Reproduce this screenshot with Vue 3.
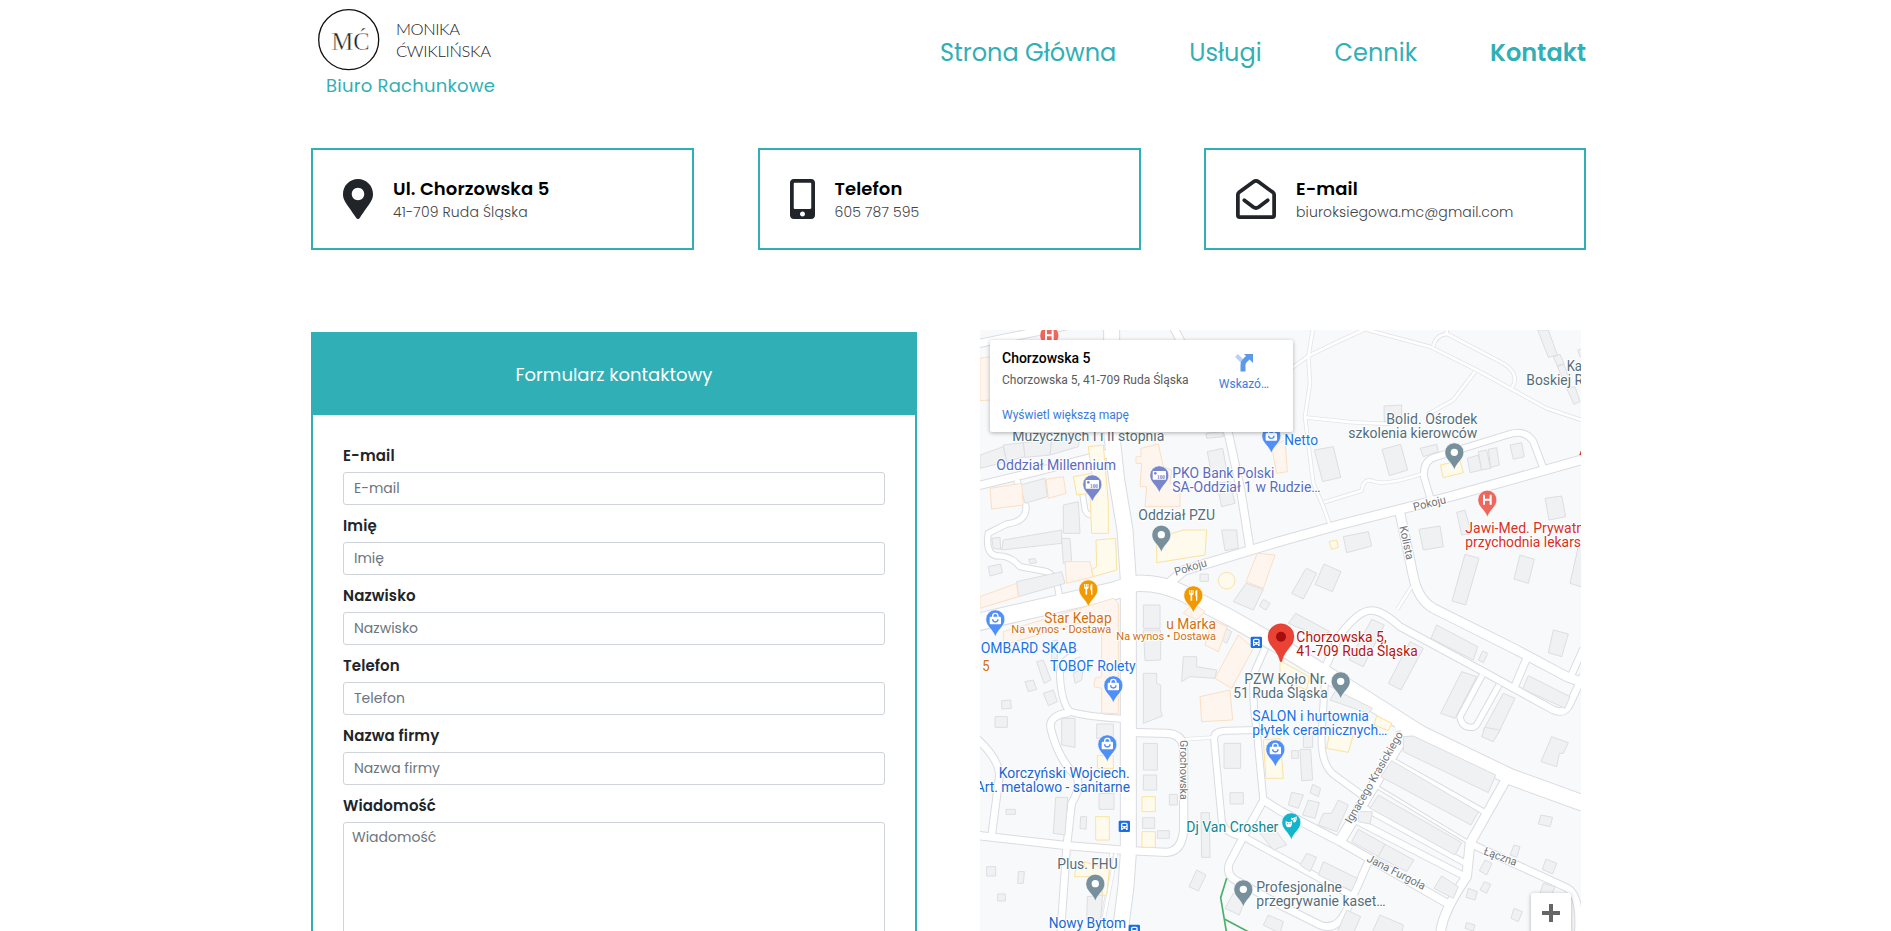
<script setup>
const nav = [
  { text: 'Strona Główna', cls: 'n1' },
  { text: 'Usługi', cls: 'n2' },
  { text: 'Cennik', cls: 'n3' },
  { text: 'Kontakt', cls: 'n4' }
]

const fields = ['E-mail', 'Imię', 'Nazwisko', 'Telefon', 'Nazwa firmy']

// Map geometry: three units per CSS pixel.
const roads = [
  [45, 'M425 30V340L440 480L465 630L475 780V1600L468 1700L450 1840'],
  [22, 'M610 20L650 100L775 340L812 510L842 700'],
  [50, 'M20 907L450 808'],
  [46, 'M440 807L500 790Q570 787 640 820L780 893L930 978L1130 1100L1350 1240L1620 1370L1840 1450'],
  [26, 'M585 800L640 752L930 664L1110 614L1440 530L1840 418'],
  [18, 'M1384 545L1362 470Q1358 420 1400 410L1610 345Q1665 325 1690 365L1722 450'],
  [26, 'M1290 580L1305 650L1330 770Q1345 840 1390 865L1640 990L1790 1070L1840 1088'],
  [20, 'M1672 1010L1634 1100'],
  [20, 'M1062 1050L1110 945Q1170 865 1210 872Q1240 875 1290 920L1540 1055L1750 1170Q1785 1185 1800 1150L1840 1065'],
  [18, 'M1800 1075L1840 985'],
  [16, 'M1537 1065L1470 1190Q1475 1225 1510 1222L1520 1215L1587 1095'],
  [22, 'M20 498L170 462L415 400'],
  [16, 'M140 480L168 560Q170 605 110 612L55 640Q45 700 80 708Q120 705 150 740L230 755Q262 770 268 830'],
  [14, 'M335 505L345 570Q350 585 372 588'],
  [22, 'M20 72L215 32L300 15'],
  [18, 'M328 1000Q265 1020 270 1070Q275 1150 300 1175Q350 1190 460 1197'],
  [20, 'M300 1178Q235 1185 242 1225Q265 1320 320 1370Q335 1400 305 1450L290 1580L272 1840'],
  [20, 'M20 1255Q90 1320 88 1370L65 1545'],
  [22, 'M20 1546L290 1577L475 1592L590 1597Q635 1595 641 1530V1290Q640 1242 590 1240L475 1237'],
  [18, 'M885 985L852 1060Q845 1130 860 1230L880 1440'],
  [18, 'M865 1230L770 1232Q732 1232 732 1255L755 1500Q760 1540 820 1550'],
  [20, 'M880 1442L820 1550L778 1630Q765 1670 810 1687L930 1755L1050 1815Q1100 1835 1130 1770L1202 1610'],
  [22, 'M880 1440L930 1472L1110 1565L1440 1755'],
  [18, 'M820 1550L930 1610L1160 1735'],
  [30, 'M1315 1225L1112 1560'],
  [18, 'M1065 1080L1055 1240Q1050 1340 1100 1370L1175 1425'],
  [26, 'M1612 1372L1500 1570L1490 1670Q1415 1780 1412 1840'],
  [14, 'M1265 1320L1542 1475'],
  [7, 'M1220 1400L1500 1570'],
  [16, 'M1180 1462L1487 1630'],
  [18, 'M1155 1500L1482 1668'],
  [20, 'M1510 1575L1790 1703Q1833 1725 1825 1840'],
  [14, 'M1300 1222L1276 1226'],
]
const paths = [
  'M1030 20L1015 110L1020 190L1005 290L1030 490L1060 560L1082 622',
  'M960 148L1015 108L1110 62L1185 28L1380 80L1520 150L1730 265L1840 302',
  'M1390 80Q1395 45 1432 42L1590 125Q1655 160 1625 205',
  'M1430 20V42', 'M1515 155L1450 240L1370 285',
  'M1005 292L1150 307L1260 312',
  'M1062 547L1175 512Q1180 475 1205 482Q1240 500 1355 462',
  'M1325 800L1282 868', 'M643 1258L732 1252',
  'M438 1600L395 1833', 'M425 1600L385 1800'
]
const grey = [
  '30,405 100,380 110,425 30,445', '100,375 160,368 165,410 110,425', '160,368 245,358 240,405 165,412', '245,358 330,350 325,380 240,405',
  '150,495 225,475 232,530 165,550', '280,555 325,545 330,640 280,640', '708,340 758,335 760,350 710,355', '712,395 758,385 770,450 725,465',
  '740,490 780,485 795,550 755,560', '1033,390 1090,380 1112,472 1058,485', '1236,388 1292,373 1313,450 1258,467', '1242,258 1295,255 1295,300 1243,305',
  '1350,385 1400,373 1405,395 1360,410', '1492,415 1525,405 1535,450 1500,458', '1525,395 1550,390 1562,445 1535,450', '1555,388 1580,383 1588,435 1562,442',
  '1620,375 1655,368 1663,410 1630,418', '1725,535 1775,528 1787,590 1737,600', '1460,577 1485,570 1505,640 1475,645', '1347,628 1410,618 1420,680 1360,690',
  '1703,30 1735,30 1762,105 1735,112', '1750,110 1770,103 1782,130 1762,138', '1762,140 1782,133 1800,185 1785,192', '1790,205 1815,200 1830,245 1812,253', '1823,90 1840,85 1840,110 1830,110',
  '1120,650 1195,635 1205,678 1130,698', '1005,750 1010,745 1040,760 1000,837 965,820', '1062,732 1113,755 1087,815 1035,793', '977,880 1080,935 1050,950 955,910',
  '1205,898 1243,915 1180,1040 1138,1020', '1320,965 1360,985 1293,1110 1255,1090', '1400,915 1523,980 1510,1020 1383,955', '1538,993 1553,1000 1540,1028 1525,1020',
  '1485,703 1527,715 1487,855 1446,843', '1650,705 1693,718 1675,790 1632,777', '1825,680 1840,680 1840,803 1800,790', '1750,930 1795,942 1775,1010 1735,998',
  '1675,1067 1800,1130 1785,1165 1658,1107', '1475,1055 1520,1070 1455,1195 1412,1180', '1600,1120 1635,1135 1585,1240 1540,1230', '1098,1110 1207,1165 1195,1180 1080,1140',
  '100,660 275,630 275,670 95,690', '65,655 90,652 92,688 70,685', '275,655 300,655 305,725 280,730', '140,785 275,755 285,790 145,830', '55,740 92,732 97,758 60,768', '176,718 195,716 200,728 180,731',
  '520,855 570,855 570,925 520,925', '520,930 572,930 572,1020 525,1022', '520,1060 560,1060 560,1090 572,1095 572,1170 577,1188 520,1210', '755,630 800,630 805,685 765,692',
  '690,762 715,762 715,784 690,784', '828,790 880,808 850,870 790,845', '880,838 900,850 888,870 868,858', '640,1010 680,1010 680,1040 740,1050 735,1075 660,1070 635,1085',
  '768,925 785,935 770,970 755,960', '200,1025 220,1020 243,1080 222,1090', '165,1085 190,1080 200,1108 175,1115', '220,1120 250,1110 262,1145 235,1157', '95,1142 122,1140 124,1165 95,1167',
  '75,1190 112,1190 112,1222 75,1222', '240,965 262,960 262,1015 245,1018', '310,1060 340,1045 335,1080 315,1090', '395,1110 445,1110 445,1145 395,1145',
  '275,1195 315,1195 315,1282 275,1275', '380,1212 430,1212 430,1250 380,1255', '387,1420 432,1420 432,1468 387,1468', '257,1432 293,1432 285,1545 250,1540',
  '332,1490 350,1490 348,1528 330,1525', '108,1468 136,1468 136,1483 108,1483', '520,1270 562,1270 562,1350 520,1350', '520,1365 560,1365 560,1410 520,1410',
  '518,1493 554,1493 554,1525 518,1525', '598,1423 622,1423 622,1455 598,1455', '562,1532 598,1532 598,1555 562,1555', '762,1270 812,1270 812,1345 762,1345',
  '780,1418 820,1418 820,1452 780,1452', '693,1478 718,1478 720,1612 695,1612', '680,1650 708,1665 685,1713 657,1700', '50,1640 77,1640 77,1668 50,1668',
  '145,1655 163,1655 160,1690 143,1690', '83,1722 106,1722 106,1743 83,1743', '352,1730 398,1725 392,1800 350,1800', '790,1720 825,1740 808,1785 765,1765', '895,1785 940,1805 930,1840 880,1815',
  '1300,1250 1330,1248 1577,1365 1555,1418 1300,1295', '1265,1322 1525,1475 1503,1515 1232,1370', '1225,1425 1475,1568 1455,1605 1200,1465', '1165,1528 1245,1573 1225,1610 1145,1565',
  '1245,1573 1332,1620 1310,1655 1225,1610', '1415,1668 1465,1700 1450,1735 1392,1705', '1745,1250 1795,1268 1780,1300 1768,1300 1760,1340 1713,1325', '1545,1222 1590,1230 1570,1265 1535,1250',
  '1713,1485 1748,1492 1740,1520 1705,1512', '1632,1575 1650,1580 1640,1612 1620,1605', '1545,1620 1566,1630 1550,1665 1528,1652', '1728,1617 1760,1630 1748,1662 1717,1648',
  '1543,1685 1562,1693 1550,1720 1530,1710', '1495,1705 1522,1715 1515,1740 1488,1732', '1632,1765 1657,1775 1645,1805 1623,1795', '1490,1808 1515,1815 1510,1833 1485,1825',
  '1720,1690 1755,1700 1745,1725 1710,1720', '1230,1785 1300,1815 1295,1840 1205,1840', '1130,1770 1172,1790 1150,1840 1100,1840', '1060,1625 1162,1675 1145,1712 1045,1665',
  '1010,1600 1040,1612 1020,1655 990,1635', '1105,1440 1135,1455 1100,1535 1045,1515 1060,1480 1085,1480', '1015,1440 1048,1448 1035,1495 998,1485', '965,1417 1000,1425 985,1465 955,1455',
  '1028,1393 1052,1405 1045,1430 1020,1418', '990,1288 1022,1288 1028,1380 995,1382', '965,1292 985,1292 985,1315 965,1315', '1165,1475 1207,1475 1200,1512 1165,1505', '1000,1240 1028,1240 1028,1282 1000,1282',
  '870,1540 905,1515 950,1575 910,1590'
]
const orange = [
  '30,115 62,110 62,240 30,242', '60,505 155,490 160,555 65,567', '228,478 280,470 288,520 235,535',
  '513,385 565,372 580,440 605,450 600,490 630,490 630,560 525,560 530,500 510,500 515,430 498,430 498,410 513,410',
  '905,380 945,360 952,455 920,460', '285,725 360,725 370,770 290,790', '30,830 140,790 145,830 30,865',
  '100,935 430,835 445,850 445,1180 395,1180 395,1105 372,1100 375,1075 395,1070 395,890 100,975',
  '862,700 915,705 880,805 828,785', '805,945 850,985 785,1105 735,1075', '725,900 772,920 745,995 705,975', '690,1130 780,1110 788,1200 695,1205', '640,880 670,850 705,875 680,900'
]
const yellow = [
  '310,470 365,460 355,380 400,375 415,550 415,640 365,640 360,520 320,525', '378,660 437,655 440,750 370,770 365,750 380,740', '560,655 575,650 640,630 710,630 705,705 560,728',
  '1411,435 1470,422 1480,458 1420,473', '1078,665 1100,660 1105,682 1085,688', '930,1022 1018,1070 1010,1110 930,1075', '1220,1187 1265,1210 1255,1232 1212,1215',
  '382,1307 430,1307 430,1345 382,1345', '377,1490 418,1490 418,1560 377,1560', '516,1430 556,1430 556,1475 516,1475', '516,1535 556,1535 556,1582 516,1582',
  '343,1625 418,1650 410,1725 400,1728 388,1670 313,1670 318,1645 343,1640', '880,1260 930,1255 940,1375 888,1375', '1080,1232 1150,1245 1135,1297 1070,1285'
]

// kind, centre x, centre y, colour
const pins = [
  ['hosp', 238, 46, '#ee675c'], ['bank', 367, 493, '#7986cb'], ['bank', 568, 466, '#7986cb'], ['bag', 904, 347, '#4f8ff7'],
  ['dot', 1453, 397, '#78909c'], ['dot', 574, 644, '#78909c'], ['hosp', 1552, 539, '#ee675c'],
  ['food', 355, 808, '#f29900'], ['food', 670, 826, '#f29900'], ['bag', 76, 898, '#4f8ff7'], ['bag', 430, 1096, '#4f8ff7'],
  ['dot', 1112, 1084, '#78909c'], ['bag', 916, 1288, '#4f8ff7'], ['bag', 412, 1273, '#4f8ff7'],
  ['dot', 376, 1691, '#78909c'], ['mask', 964, 1507, '#12b5cb'], ['dot', 820, 1708, '#78909c']
]
const stops = [[859, 967], [463, 1519], [493, 1831]]

const slate = '#546e7a', blue = '#1a73e8', indigo = '#5c6bc0', amber = '#d2700d', red = '#d93025', dark = '#b31412'
// text, x, baseline, width, colour, size
const labels = [
  ['Muzycznych I i II stopnia', 127, 363, 456, slate], ['Oddział Millennium', 79, 450, 359, indigo],
  ['PKO Bank Polski', 607, 475, 306, indigo], ['SA-Oddział 1 w Rudzie…', 607, 516, 445, indigo],
  ['Oddział PZU', 505, 600, 230, slate], ['Netto', 943, 376, 101, blue],
  ['Bolid. Ośrodek', 1249, 312, 273, slate], ['szkolenia kierowców', 1135, 354, 387, slate],
  ['Ka', 1790, 153, 46, slate], ['Boskiej R', 1669, 195, 170, slate],
  ['Jawi-Med. Prywatn', 1486, 639, 356, red], ['przychodnia lekars', 1486, 682, 347, red],
  ['Star Kebap', 223, 909, 202, amber], ['Na wynos • Dostawa', 124, 940, 300, amber, 34],
  ['u Marka', 589, 927, 149, amber], ['Na wynos • Dostawa', 439, 959, 299, amber, 34],
  ['OMBARD SKAB', 32, 999, 288, blue], ['5', 37, 1052, 22, amber], ['TOBOF Rolety', 240, 1053, 257, blue],
  ['Chorzowska 5,', 979, 966, 271, dark], ['41-709 Ruda Śląska', 979, 1008, 364, dark],
  ['PZW Koło Nr.', 823, 1091, 249, slate], ['51 Ruda Śląska', 790, 1134, 283, slate],
  ['SALON i hurtownia', 847, 1203, 350, blue], ['płytek ceramicznych…', 847, 1245, 405, blue],
  ['Korczyński Wojciech.', 86, 1374, 393, '#1967d2'], ['Art. metalowo - sanitarne', 17, 1416, 463, '#1967d2'],
  ['Dj Van Crosher', 649, 1537, 276, '#0c878f'], ['Plus. FHU', 262, 1647, 181, slate],
  ['Nowy Bytom', 236, 1824, 232, '#1967d2'],
  ['Profesjonalne', 859, 1716, 257, slate], ['przegrywanie kaset…', 859, 1758, 388, slate]
]
// text, x, baseline, angle, width
const streets = [
  ['Pokoju', 1333, 573, -14, 100], ['Pokoju', 617, 767, -17, 100], ['Kolista', 1288, 620, 78, 103],
  ['Grochowska', 630, 1260, 90, 180], ['Ignacego Krasickiego', 1144, 1513, -60, 312],
  ['Jana Furgoła', 1188, 1623, 27, 192], ['Łączna', 1539, 1603, 20, 103]
]
</script>

<template>
  <div class="page">
    <header class="top">
      <svg class="logo" width="200" height="104" viewBox="0 0 200 104">
        <circle cx="37.7" cy="39.7" r="30" fill="none" stroke="#111" stroke-width="1.3" />
        <text x="20.500" y="50" class="mono" textLength="38" lengthAdjust="spacingAndGlyphs">MĆ</text>
        <text x="85" y="35" class="name" textLength="64">MONIKA</text>
        <text x="85" y="57" class="name" textLength="95">ĆWIKLIŃSKA</text>
        <text x="15" y="91.500" class="tag" textLength="169">Biuro Rachunkowe</text>
      </svg>
      <nav class="nav">
        <a v-for="n in nav" :key="n.text" :class="n.cls">{{ n.text }}</a>
      </nav>
    </header>

    <section class="cards">
      <div class="card">
        <svg width="30" height="40" viewBox="0 0 384 512"><path fill="#212529" d="M172.3 501.7C27 291 0 269.4 0 192 0 86 86 0 192 0s192 86 192 192c0 77.400-27 99-172.300 309.700-9.500 13.800-29.900 13.800-39.400 0zM192 272c44.200 0 80-35.800 80-80s-35.800-80-80-80-80 35.800-80 80 35.800 80 80 80z" /></svg>
        <div class="info"><h3>Ul. Chorzowska 5</h3><p>41-709 Ruda Śląska</p></div>
      </div>
      <div class="card">
        <svg width="25" height="40" viewBox="0 0 320 512"><path fill="#212529" d="M272 0H48C21.500 0 0 21.500 0 48v416c0 26.500 21.500 48 48 48h224c26.500 0 48-21.500 48-48V48c0-26.500-21.500-48-48-48zM160 480c-17.700 0-32-14.300-32-32s14.300-32 32-32 32 14.300 32 32-14.300 32-32 32zm112-108c0 6.600-5.400 12-12 12H60c-6.600 0-12-5.400-12-12V60c0-6.600 5.400-12 12-12h200c6.600 0 12 5.400 12 12v312z" /></svg>
        <div class="info"><h3>Telefon</h3><p>605 787 595</p></div>
      </div>
      <div class="card last">
        <svg width="40" height="40" viewBox="0 0 512 512" fill="none" stroke="#212529" stroke-width="48" stroke-linecap="round">
          <path d="M24 200Q24 184 36 174L220 38Q256 12 292 38L476 174Q488 184 488 200V464Q488 488 464 488H48Q24 488 24 464Z" />
          <path d="M106 272L220 358Q256 384 292 358L406 272" />
        </svg>
        <div class="info"><h3>E-mail</h3><p>biuroksiegowa.mc@gmail.com</p></div>
      </div>
    </section>

    <main class="main">
      <form class="form">
        <div class="form-head">Formularz kontaktowy</div>
        <div class="form-body">
          <div v-for="f in fields" :key="f" class="field">
            <label>{{ f }}</label>
            <input type="text" :placeholder="f" />
          </div>
          <div class="field">
            <label>Wiadomość</label>
            <textarea placeholder="Wiadomość"></textarea>
          </div>
        </div>
      </form>

      <div class="map">
        <svg width="601" height="601" viewBox="30 30 1803 1803">
          <defs>
            <path id="pin" d="M-28.500 0a28.500 28.500 0 1 1 57 0c0 22-20 28-28.500 53c-8.500-25-28.500-31-28.500-53z" />
          </defs>
          <rect x="30" y="30" width="1803" height="1803" fill="#f8f9fb" />
          <g fill="none" stroke="#e3e5e9" stroke-width="13" stroke-linejoin="round"><path v-for="(d, i) in paths" :key="i" :d="d" /></g>
          <g fill="none" stroke="#d9dce2" stroke-linejoin="round"><path v-for="(r, i) in roads" :key="i" :d="r[1]" :stroke-width="r[0] + 6" /></g>
          <g fill="none" stroke="#fff" stroke-width="8" stroke-linejoin="round"><path v-for="(d, i) in paths" :key="i" :d="d" /></g>
          <g fill="none" stroke="#fff" stroke-linejoin="round"><path v-for="(r, i) in roads" :key="i" :d="r[1]" :stroke-width="r[0]" /></g>
          <g fill="#f0f1f2" stroke="#dcdee2" stroke-width="3"><polygon v-for="p in grey" :key="p" :points="p" /></g>
          <g fill="#fef6ee" stroke="#fbdfc4" stroke-width="3"><polygon v-for="p in orange" :key="p" :points="p" /></g>
          <g fill="#fefaec" stroke="#fbe2a0" stroke-width="3">
            <polygon v-for="p in yellow" :key="p" :points="p" />
            <circle cx="770" cy="782" r="25" />
          </g>
          <path d="M770 1675L752 1733L770 1840M763 1797L840 1838" fill="none" stroke="#4caf6a" stroke-width="5" />
          <path d="M1828 405L1833 391V405Z" fill="#d93025" />

          <g class="street">
            <text v-for="(s, i) in streets" :key="i" :transform="`translate(${s[1]} ${s[2]}) rotate(${s[3]})`" :textLength="s[4]" lengthAdjust="spacingAndGlyphs">{{ s[0] }}</text>
          </g>

          <g v-for="(s, i) in stops" :key="'s' + i" :transform="`translate(${s[0]} ${s[1]})`">
            <rect x="-17" y="-17" width="34" height="34" rx="4" fill="#1a6fe3" />
            <path d="M-10 11V-6Q-10 -11 -5 -11H5Q10 -11 10 -6V11H5V7H-5V11Z" fill="#fff" />
            <path d="M-6 -7H6V-1H-6Z" fill="#1a6fe3" />
            <path d="M-7 3H-3M3 3H7" stroke="#1a6fe3" stroke-width="3" />
          </g>

          <g v-for="(p, i) in pins" :key="'p' + i" :transform="`translate(${p[1]} ${p[2]})`">
            <use href="#pin" :fill="p[3]" stroke="#fff" stroke-width="2" />
            <circle v-if="p[0] === 'dot'" r="11" fill="#fff" />
            <g v-else-if="p[0] === 'bank'">
              <rect x="-20" y="-13" width="40" height="26" rx="2" fill="#fff" />
              <circle cx="-12" cy="-6" r="4" :fill="p[3]" />
              <text x="-7" y="10" class="note" :fill="p[3]" textLength="24" lengthAdjust="spacingAndGlyphs">100</text>
            </g>
            <g v-else-if="p[0] === 'bag'">
              <rect x="-17" y="-8" width="34" height="23" rx="3" fill="#fff" />
              <path d="M-8 -7V-10A8 8 0 0 1 8 -10V-7" fill="none" stroke="#fff" stroke-width="4" />
              <path d="M-8 0A8 8 0 0 0 8 0" fill="none" :stroke="p[3]" stroke-width="4" />
            </g>
            <path v-else-if="p[0] === 'hosp'" d="M-10 -15V15M10 -15V15M-10 0H10" fill="none" stroke="#fff" stroke-width="6" />
            <g v-else-if="p[0] === 'food'" fill="none" stroke="#fff">
              <path d="M-11 -16V-6M-6 -16V-6M-1 -16V-6" stroke-width="3" />
              <path d="M-13 -7H1Q1 0 -6 0Q-13 0 -13 -7" fill="#fff" stroke="none" />
              <path d="M-6 -2V16" stroke-width="5" />
              <path d="M6 2V-10Q6 -16 12 -17V16H8V2Z" fill="#fff" stroke="none" />
            </g>
            <g v-else fill="#fff">
              <path d="M-17 -4L-11 -1L-4 -1L2 -4V7Q0 15 -7.500 15Q-15 15 -17 7Z" />
              <path d="M0 -14L5 -13L11 -15L16 -18V-8Q14 0 7 1L5 -6L0 -7Z" />
              <g :fill="p[3]"><circle cx="-11" cy="4" r="1.800" /><circle cx="-4" cy="4" r="1.800" /><circle cx="7" cy="-9" r="1.500" /><circle cx="12" cy="-10" r="1.500" /></g>
            </g>
          </g>

          <g transform="translate(933 950)">
            <path d="M-39 0A39 39 0 1 1 39 0C39 30 10 38 3 73Q0 78 -3 73C-10 38 -39 30 -39 0Z" fill="#ea4335" stroke="#c5221f" stroke-width="1" />
            <circle r="15" fill="#a50e0e" />
          </g>

          <g class="label">
            <text v-for="(l, i) in labels" :key="i" :x="l[1]" :y="l[2]" :fill="l[4]" :font-size="l[5] || 43" :textLength="l[3]" lengthAdjust="spacingAndGlyphs">{{ l[0] }}</text>
          </g>
        </svg>

        <div class="place">
          <div class="place-text">
            <b>Chorzowska 5</b>
            <span>Chorzowska 5, 41-709 Ruda Śląska</span>
            <a>Wyświetl większą mapę</a>
          </div>
          <div class="route">
            <svg width="18" height="19" viewBox="0 0 18 19">
              <path d="M1.500 2.500L8.500 9.500" stroke="#b5d2f6" stroke-width="4" />
              <path d="M8 18.500V12Q8 9.500 10 7.500L14 3.500" fill="none" stroke="#5c9ae8" stroke-width="5" />
              <path d="M9 1H18V10Z" fill="#5c9ae8" />
            </svg>
            <a>Wskazó…</a>
          </div>
        </div>
        <div class="zoom"><svg width="18" height="18" viewBox="0 0 18 18"><path d="M9 0V18M0 9H18" stroke="#666" stroke-width="4" /></svg></div>
      </div>
    </main>
  </div>
</template>

<style>
html, body { margin: 0; overflow: hidden; background: #fff; }
</style>

<style scoped>
* { box-sizing: border-box; }
.page {
  width: 1275px;
  height: 931px;
  margin-left: 311px;
  overflow: hidden;
  color: #212529;
  font-family: Poppins, Inter, "Noto Sans", sans-serif;
}
.top { display: flex; justify-content: space-between; height: 148px; }
.logo { display: block; }
.mono { font: 25px "Liberation Serif", serif; fill: #222; stroke: #fff; stroke-width: 0.4px; }
.name { font: 300 16.500px Lato, sans-serif; fill: #222; }
.tag { font-size: 18px; fill: #31afb6; }
.nav { display: flex; gap: 73px; padding-top: 35px; font-size: 24px; line-height: 36px; color: #31afb6; white-space: nowrap; }
.n4 { font-weight: 600; }

.cards { display: flex; justify-content: space-between; }
.card { display: flex; align-items: center; gap: 20px; width: 383px; height: 102px; padding: 0 30px; border: 2px solid #31afb6; }
.card.last { width: 382px; }
.info { padding-top: 2px; }
.info h3 { margin: 0; font-size: 18px; line-height: 22px; font-weight: 600; letter-spacing: 0.1px; color: #000; }
.info p { margin: 2px 0 0; font-size: 14px; line-height: 21px; font-weight: 300; letter-spacing: 0.13px; color: #444; }

.main { display: flex; justify-content: space-between; padding-right: 5px; margin-top: 80px; }
.form { width: 606px; height: 800px; margin-top: 2px; border: 2px solid #31afb6; }
.form-head { height: 81px; padding-top: 27px; background: #31afb6; color: #fff; font-size: 18px; line-height: 27px; text-align: center; }
.form-body { padding: 29px 30px 0; }
.field { height: 70px; }
.field label { display: block; height: 28px; font-size: 15px; line-height: 23px; font-weight: 600; letter-spacing: 0.12px; }
input, textarea { display: block; width: 542px; height: 33px; padding: 0 10px; border: 1px solid #ced4da; border-radius: 3px; background: #fff; font: inherit; font-size: 14px; outline: none; }
textarea { height: 260px; padding: 4px 8px; resize: none; }
input::placeholder, textarea::placeholder { color: #6c757d; opacity: 1; }

.map { position: relative; width: 601px; height: 601px; font-family: Roboto, sans-serif; overflow: hidden; }
.map > svg { display: block; }
.label { paint-order: stroke; stroke: #fff; stroke-width: 6px; stroke-linejoin: round; }
.street { font-size: 34px; fill: #6f7479; paint-order: stroke; stroke: #fff; stroke-width: 6px; }
.note { font: bold 17px "Liberation Serif", serif; }
.place { position: absolute; left: 10px; top: 10px; width: 303px; height: 92px; display: flex; justify-content: space-between; padding: 9px 24px 0 12px; background: #fff; border-radius: 2px; box-shadow: 0 1px 4px rgba(0, 0, 0, 0.3); font-size: 12px; }
.place-text { display: flex; flex-direction: column; }
.place b { font-size: 14px; line-height: 18px; font-weight: 500; color: #000; }
.place span { margin-top: 5px; line-height: 16px; color: #5b5b5b; }
.place a { color: #3a7be0; line-height: 16px; }
.place-text a { margin-top: 19px; }
.route { display: flex; flex-direction: column; align-items: center; padding-top: 4px; }
.route a { margin-top: 4px; }
.zoom { position: absolute; left: 551px; top: 563px; width: 40px; height: 60px; display: flex; justify-content: center; padding-top: 11px; background: #fff; border-radius: 2px; box-shadow: 0 1px 4px rgba(0, 0, 0, 0.3); }
</style>
